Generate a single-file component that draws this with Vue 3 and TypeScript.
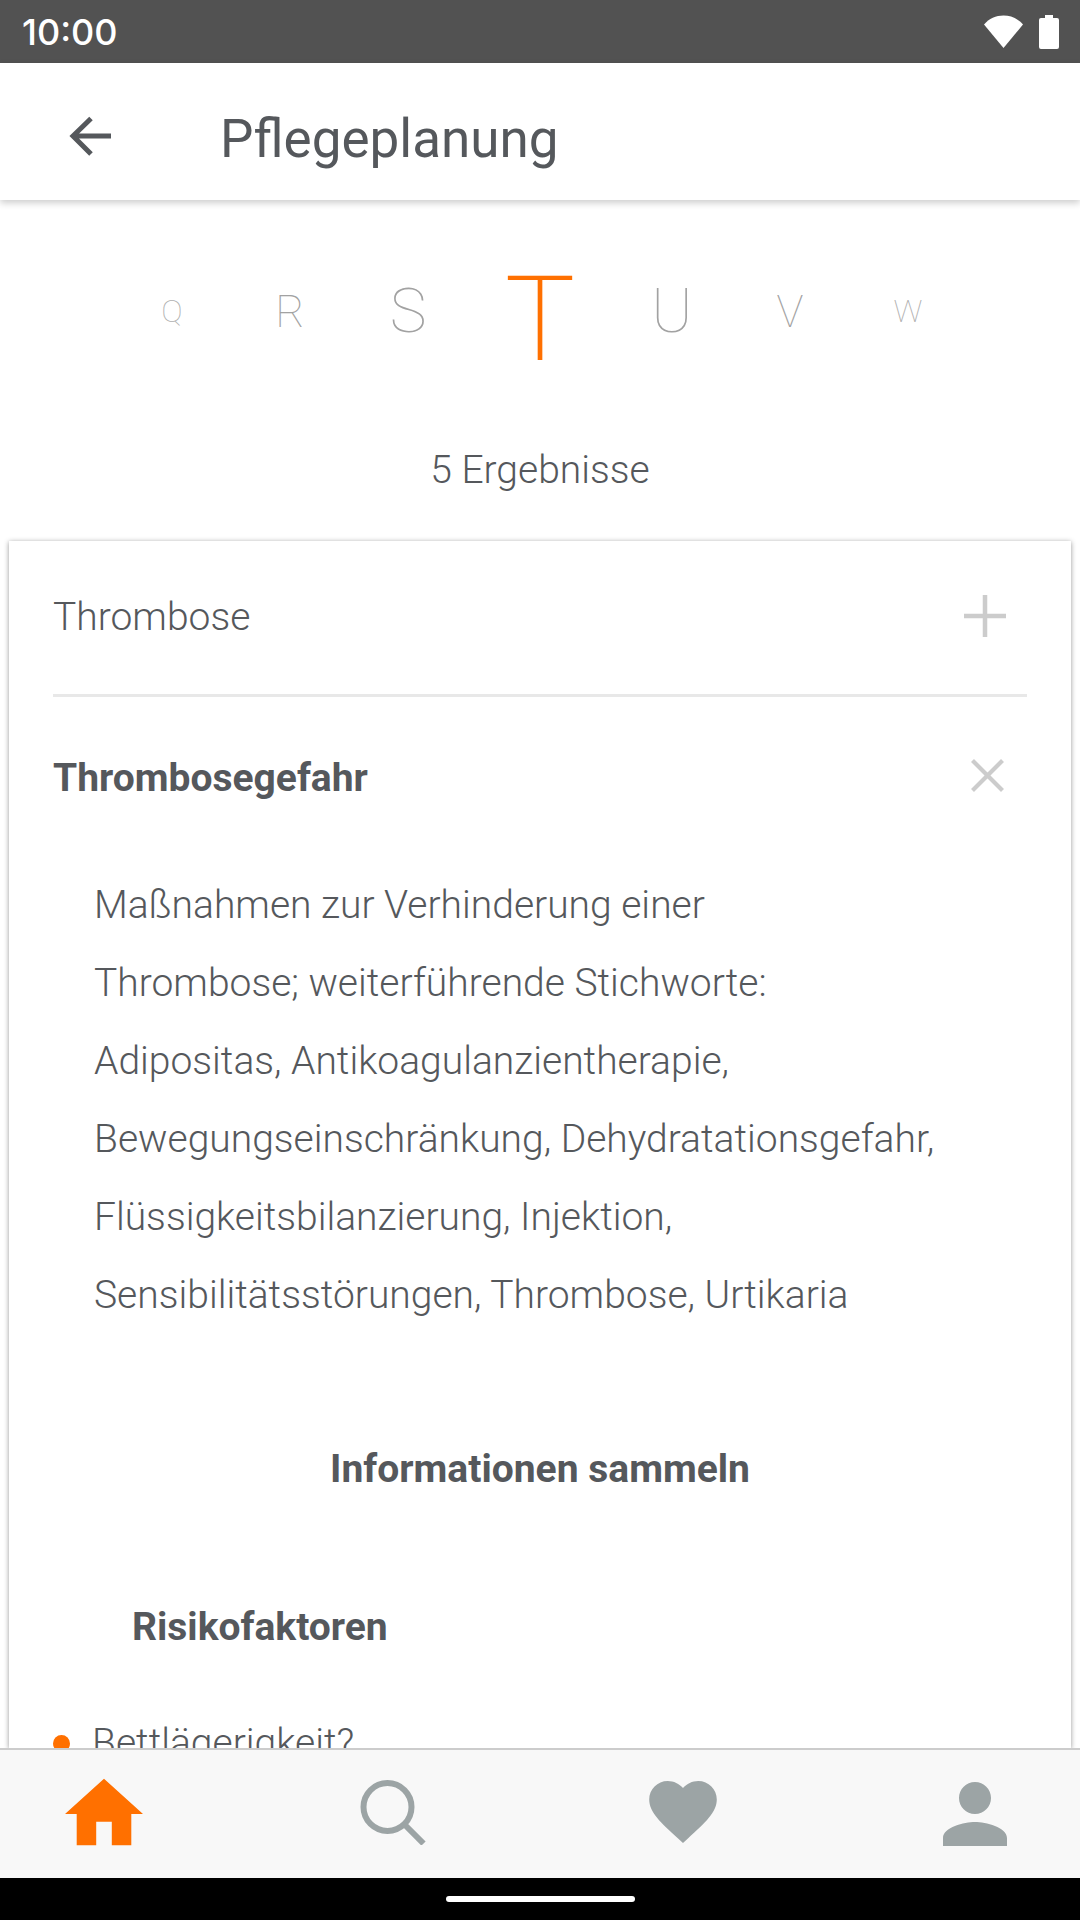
<script setup lang="ts">
const letters = [
  { c: 'Q', cls: 'l1' },
  { c: 'R', cls: 'l2' },
  { c: 'S', cls: 'l3' },
  { c: 'T', cls: 'l4' },
  { c: 'U', cls: 'l3' },
  { c: 'V', cls: 'l2' },
  { c: 'W', cls: 'l1' },
]
const bodyLines = [
  'Maßnahmen zur Verhinderung einer',
  'Thrombose; weiterführende Stichworte:',
  'Adipositas, Antikoagulanzientherapie,',
  'Bewegungseinschränkung, Dehydratationsgefahr,',
  'Flüssigkeitsbilanzierung, Injektion,',
  'Sensibilitätsstörungen, Thrombose, Urtikaria',
]
</script>

<template>
  <div class="screen">
    <header class="status">
      <span class="time">10:00</span>
      <div class="status-icons">
        <svg class="wifi" viewBox="0 0 39 33"><path d="M19.500 33 0 9.500C5 3.500 12 0.500 19.500 0.500S34 3.500 39 9.500L19.500 33z" fill="#fff"/></svg>
        <svg class="battery" viewBox="0 0 20 34"><path d="M6 0h8v3h4a2 2 0 0 1 2 2v27a2 2 0 0 1-2 2H2a2 2 0 0 1-2-2V5a2 2 0 0 1 2-2h4V0z" fill="#fff"/></svg>
      </div>
    </header>
    <div class="toolbar">
      <svg class="back" viewBox="0 0 42 42"><path d="M42 21H4M22 3.500 4 21l18 18" stroke="#55585c" stroke-width="5" fill="none"/></svg>
      <h1 class="title">Pflegeplanung</h1>
    </div>
    <main class="content">
      <div class="letters">
        <span v-for="l in letters" :key="l.c" class="letter" :class="l.cls">{{ l.c }}</span>
      </div>
      <p class="count">5 Ergebnisse</p>
      <section class="card">
        <div class="row row-first">
          <span class="row-text">Thrombose</span>
          <svg class="plus" viewBox="0 0 42 42"><path d="M21 0v42M0 21h42" stroke="#cccccc" stroke-width="4.500" fill="none"/></svg>
        </div>
        <div class="row row-second">
          <span class="row-bold">Thrombosegefahr</span>
          <svg class="close" viewBox="0 0 33 33"><path d="M1.500 1.500l30 30M31.500 1.500l-30 30" stroke="#cccccc" stroke-width="4.200" fill="none"/></svg>
        </div>
        <div class="body">
          <p v-for="line in bodyLines" :key="line" class="body-line">{{ line }}</p>
        </div>
        <h2 class="section-title">Informationen sammeln</h2>
        <h3 class="sub-title">Risikofaktoren</h3>
        <div class="bullet-row">
          <span class="dot"></span>
          <span class="bullet-text">Bettlägerigkeit?</span>
        </div>
      </section>
    </main>
    <nav class="tabbar">
      <div class="tab">
        <svg class="home" viewBox="2 3 20 17"><path d="M10 20v-6h4v6h5v-8h3L12 3 2 12h3v8z" fill="#ff7000"/></svg>
      </div>
      <div class="tab">
        <svg class="search" viewBox="0 0 66 66"><circle cx="27.500" cy="28" r="24" stroke="#9ca4a5" stroke-width="6" fill="none"/><path d="M44 45l19.500 19.500" stroke="#9ca4a5" stroke-width="6" fill="none"/></svg>
      </div>
      <div class="tab">
        <svg class="heart" viewBox="2 3 20 18.350"><path d="M12 21.350l-1.450-1.320C5.400 15.360 2 12.280 2 8.500 2 5.420 4.420 3 7.500 3c1.740 0 3.410.81 4.500 2.090C13.090 3.810 14.760 3 16.500 3 19.580 3 22 5.420 22 8.500c0 3.780-3.400 6.860-8.550 11.540L12 21.350z" fill="#9ca4a5"/></svg>
      </div>
      <div class="tab">
        <svg class="person" viewBox="4 4 16 16"><path d="M12 12c2.210 0 4-1.790 4-4s-1.790-4-4-4-4 1.790-4 4 1.790 4 4 4zm0 2c-2.670 0-8 1.340-8 4v2h16v-2c0-2.660-5.330-4-8-4z" fill="#9ca4a5"/></svg>
      </div>
    </nav>
    <div class="navbar"><span class="pill"></span></div>
  </div>
</template>

<style>
html, body { margin: 0; background: #fff; }
</style>

<style scoped>
.screen {
  width: 1080px;
  height: 1920px;
  display: flex;
  flex-direction: column;
  overflow: hidden;
  background: #fff;
  font-family: Roboto, "Liberation Sans", sans-serif;
  color: #55585c;
}
.status {
  flex: 0 0 63px;
  background: #525252;
  display: flex;
  align-items: center;
  justify-content: space-between;
  padding: 0 21px 0 22px;
}
.time {
  font-family: Inter, Roboto, sans-serif;
  font-size: 36px;
  font-weight: 500;
  color: #fff;
}
.status-icons { display: flex; align-items: center; gap: 16px; }
.wifi { width: 39px; height: 33px; display: block; }
.battery { width: 20px; height: 34px; display: block; }
.toolbar {
  flex: 0 0 137px;
  box-sizing: border-box;
  padding-top: 9px;
  display: flex;
  align-items: center;
  background: #fff;
  box-shadow: 0 3px 7px rgba(0, 0, 0, 0.2);
  position: relative;
  z-index: 2;
}
.back { width: 42px; height: 42px; margin-left: 69px; }
.title {
  margin: 5px 0 0 109px;
  font-size: 53px;
  font-weight: 400;
  color: #55585c;
}
.content {
  flex: 1 1 0;
  min-height: 0;
  overflow: hidden;
  display: flex;
  flex-direction: column;
}
.letters {
  display: flex;
  justify-content: center;
  align-items: center;
  height: 160px;
  margin-top: 31px;
}
.letter {
  flex: 0 0 118px;
  text-align: center;
  color: #a2a2a2;
  font-weight: 100;
  line-height: 1;
}
.l1 { font-size: 32px; color: #b0b0b0; }
.l2 { font-size: 45px; }
.l3 { font-size: 62px; }
.l4 { flex-basis: 146px; font-size: 118px; color: #ff7000; font-weight: 200; margin-top: 18px; }
.count {
  margin: 55px 0 0;
  text-align: center;
  font-size: 39px;
  font-weight: 300;
  line-height: 48px;
  color: #55585c;
}
.card {
  margin: 47px 9px 0;
  flex: 1 1 0;
  background: #fff;
  box-shadow: 0 1px 5px rgba(0, 0, 0, 0.42);
  padding: 0 44px;
  overflow: hidden;
}
.row {
  display: flex;
  align-items: center;
  justify-content: space-between;
}
.row-first {
  height: 153px;
  border-bottom: 3px solid #e8e8e8;
  padding-right: 21px;
}
.row-second { height: 160px; padding-right: 23px; }
.row-text { font-size: 39px; font-weight: 300; margin-top: -2px; }
.row-bold { font-size: 39px; font-weight: 700; margin-top: 2px; }
.plus { width: 42px; height: 42px; margin-top: -3px; }
.close { width: 33px; height: 33px; margin-top: -4px; }
.body { padding-left: 41px; margin-top: 9px; }
.body-line {
  margin: 0;
  font-size: 39px;
  font-weight: 300;
  line-height: 78px;
  white-space: nowrap;
}
.section-title {
  margin: 110px 0 0;
  text-align: center;
  font-size: 39px;
  font-weight: 700;
  line-height: 50px;
}
.sub-title {
  margin: 108px 0 0 79px;
  font-size: 39px;
  font-weight: 700;
  line-height: 50px;
}
.bullet-row {
  display: flex;
  align-items: center;
  margin-top: 66px;
  gap: 22px;
}
.dot {
  width: 17px;
  height: 17px;
  border-radius: 50%;
  background: #ff7000;
}
.bullet-text { font-size: 39px; font-weight: 300; line-height: 50px; }
.tabbar {
  flex: 0 0 130px;
  box-sizing: border-box;
  border-top: 2px solid #cccccc;
  background: #f8f8f8;
  display: flex;
  position: relative;
  z-index: 2;
}
.tab {
  width: 25%;
  box-sizing: border-box;
  padding-bottom: 4px;
  display: flex;
  align-items: center;
  justify-content: center;
}
.home { width: 78px; height: 70px; margin-right: 62px; }
.search { width: 66px; height: 66px; margin-right: 24px; }
.heart { width: 68px; height: 62px; margin-left: 16px; }
.person { width: 64px; height: 64px; margin-left: 60px; margin-top: 4px; }
.navbar {
  flex: 0 0 42px;
  background: #000;
  display: flex;
  align-items: center;
  justify-content: center;
}
.pill {
  width: 189px;
  height: 6px;
  border-radius: 3px;
  background: #fff;
}
</style>
